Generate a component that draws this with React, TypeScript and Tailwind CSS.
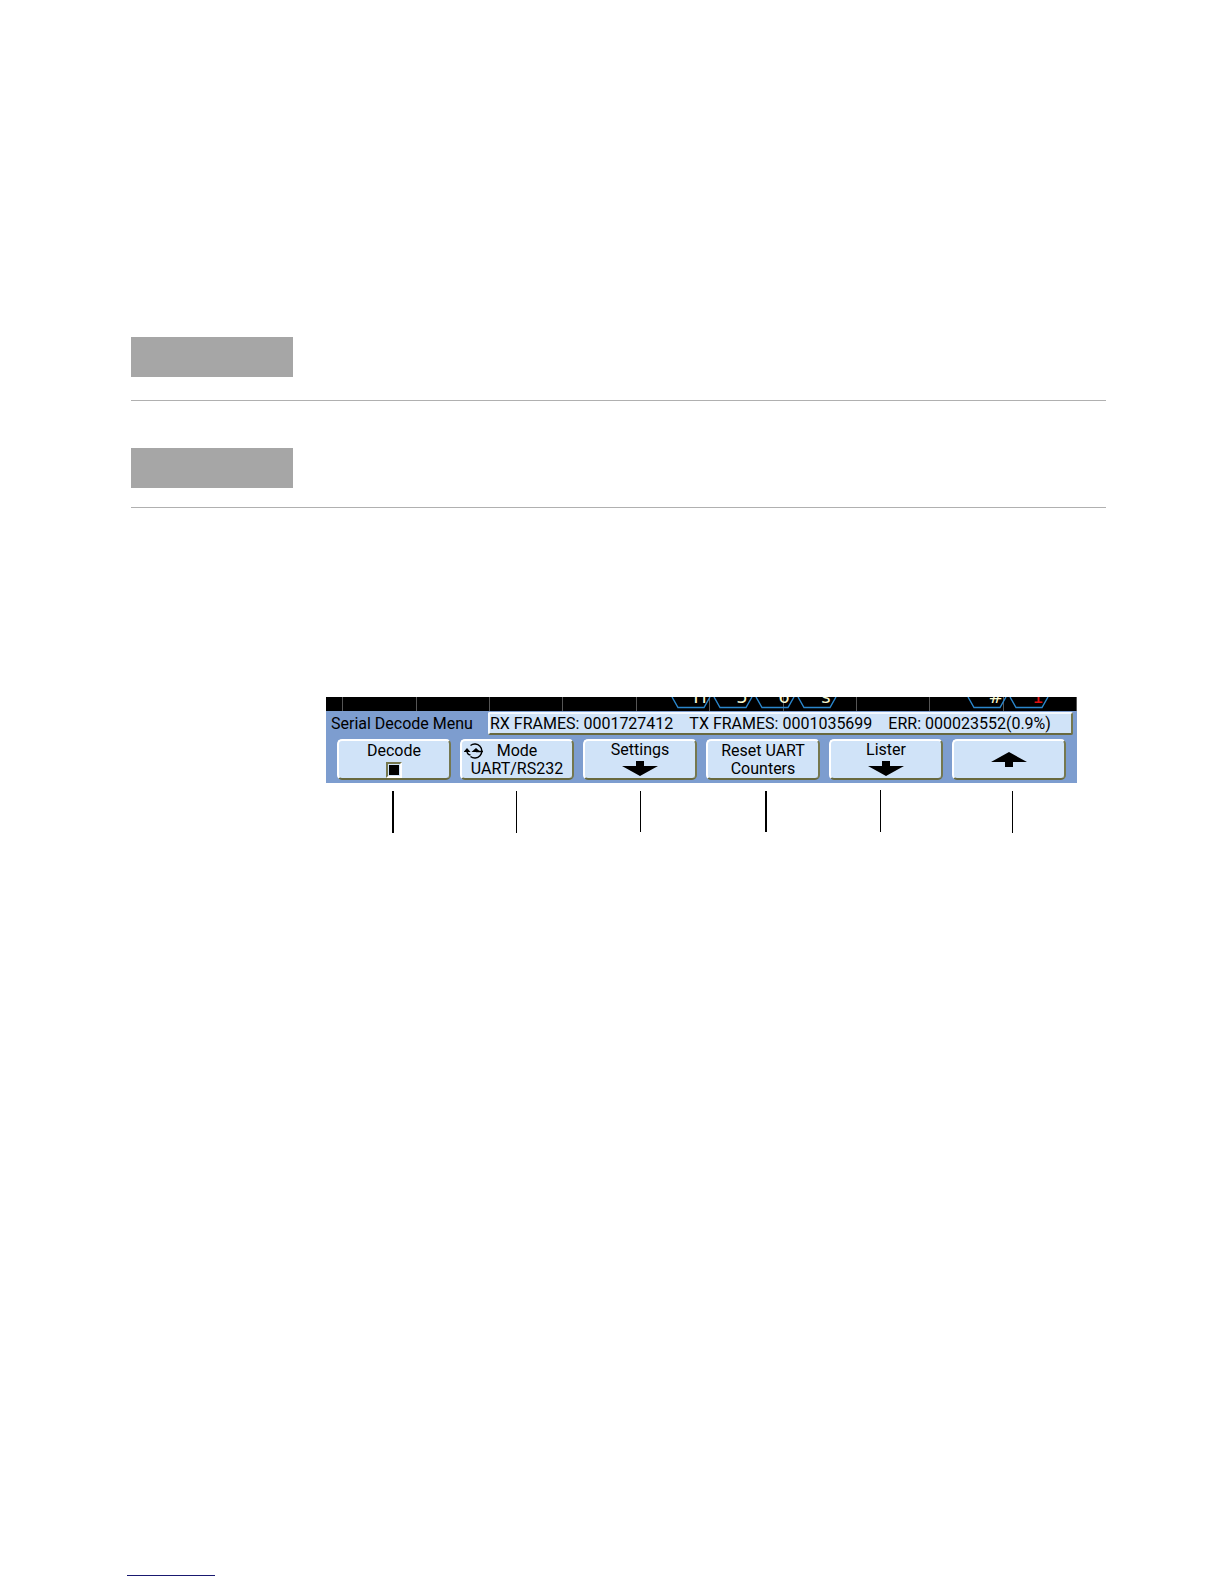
import React from "react";

const gridLines = [16, 90, 163, 236, 310, 383, 457, 530, 603, 677, 750];

const cells = [
  { x: 346, glyph: "H", color: "#f8f8d0" },
  { x: 388, glyph: "5", color: "#f8f8d0" },
  { x: 430, glyph: "6", color: "#f8f8d0" },
  { x: 472, glyph: "s", color: "#f8f8d0" },
  { x: 642, glyph: "#", color: "#f8f8d0" },
  { x: 684, glyph: "1", color: "#e01010" },
];

const leaders = [
  { x: 66, w: 2, y: 1, h: 42 },
  { x: 190, w: 1, y: 1, h: 42 },
  { x: 314, w: 1, y: 1, h: 41 },
  { x: 439, w: 2, y: 1, h: 41 },
  { x: 554, w: 1, y: 0, h: 42 },
  { x: 686, w: 1, y: 1, h: 42 },
];

function Trace() {
  return (
    <svg viewBox="0 0 751 14" className="block w-full bg-black" aria-label="Decoded trace">
      {gridLines.map((x) => (
        <rect key={x} x={x} y="0" width="1" height="14" fill="#555" />
      ))}
      {cells.map((c) => (
        <g key={c.x}>
          <path d={`M${c.x} 0L${c.x + 6} 10.5H${c.x + 32}L${c.x + 38} 0`} fill="none" stroke="#2a86cc" strokeWidth="1.4" />
          <text x={c.x + 28} y="6" textAnchor="middle" fontSize="18" fill={c.color} fontFamily="DejaVu Sans, sans-serif">
            {c.glyph}
          </text>
        </g>
      ))}
    </svg>
  );
}

function Arrow({ up = false }: { up?: boolean }) {
  return (
    <svg viewBox="0 0 36 15" className="my-0.5 h-[15px] w-9 shrink-0" aria-hidden="true">
      <path d={up ? "M0 10 18 0 36 10H22V15H14V10Z" : "M14 0H22V5H36L18 15 0 5H14Z"} />
    </svg>
  );
}

function KnobIcon() {
  return (
    <svg viewBox="0 0 20 18" className="absolute top-px left-0.5 h-[18px] w-5" aria-hidden="true">
      <path d="M6.5 3.5A7 7 0 1 1 6.5 14.5M3 9Q3 12.5 6.5 13M12 9.5H19" fill="none" stroke="#000" strokeWidth="1.4" />
      <path d="M-.5 10 3 6 6.5 10ZM7.5 10 12 6 16.5 10Z" />
    </svg>
  );
}

const keyFrame =
  "relative flex h-[41px] min-w-0 flex-1 flex-col items-center justify-center rounded-[5px] border-2 border-t-white border-r-[#75784f] border-b-[#68693f] border-l-white bg-[#d0e3f8]";

function Softkey({ children, label }: { children: React.ReactNode; label?: string }) {
  return (
    <button type="button" aria-label={label} className={keyFrame}>
      {children}
    </button>
  );
}

export default function App() {
  return (
    <main className="flex min-h-screen flex-col bg-white pt-[337px] pr-[118px] pb-2 pl-[127px] font-[Roboto,sans-serif] text-base leading-[18px] text-black">
      <section className="ml-1 border-b border-[#b0b0b0] pb-[23px]">
        <div className="h-10 w-[162px] bg-[#a6a6a6]" />
      </section>
      <section className="mt-[47px] ml-1 border-b border-[#b0b0b0] pb-[19px]">
        <div className="h-10 w-[162px] bg-[#a6a6a6]" />
      </section>
      <section className="mt-[189px] mr-[29px] ml-[199px]">
        <Trace />
        <div className="bg-[#7d9dcf] pt-px pb-[3px]">
          <div className="flex items-center pr-1 pl-[5px]">
            <h1 className="w-[157px] whitespace-nowrap">Serial Decode Menu</h1>
            <p className="flex h-[23px] min-w-0 flex-1 items-center gap-4 rounded-[2px] border-2 border-t-[#f4f9ff] border-r-[#75784f] border-b-[#68693f] border-l-[#f4f9ff] bg-[#d0e3f8] whitespace-nowrap">
              <span>RX FRAMES: 0001727412</span>
              <span>TX FRAMES: 0001035699</span>
              <span>ERR: 000023552(0.9%)</span>
            </p>
          </div>
          <div className="mt-1 flex gap-[9px] px-[11px]">
            <label className={keyFrame}>
              Decode
              <input
                type="checkbox"
                defaultChecked
                className="mt-0.5 size-4 appearance-none border-2 border-t-[#75784f] border-r-white border-b-white border-l-[#75784f] bg-white p-px checked:bg-black checked:bg-clip-content"
              />
            </label>
            <Softkey>
              <KnobIcon />
              <span>Mode</span>
              <span>UART/RS232</span>
            </Softkey>
            <Softkey>
              <span>Settings</span>
              <Arrow />
            </Softkey>
            <Softkey>
              <span>Reset UART</span>
              <span>Counters</span>
            </Softkey>
            <Softkey>
              <span>Lister</span>
              <Arrow />
            </Softkey>
            <Softkey label="Back">
              <Arrow up />
            </Softkey>
          </div>
        </div>
        <svg viewBox="0 0 751 43" className="mt-[7px] block w-full" aria-hidden="true">
          {leaders.map((l) => (
            <rect key={l.x} x={l.x} y={l.y} width={l.w} height={l.h} />
          ))}
        </svg>
      </section>
      <div className="mt-auto h-px w-[88px] bg-[#191970]" />
    </main>
  );
}
